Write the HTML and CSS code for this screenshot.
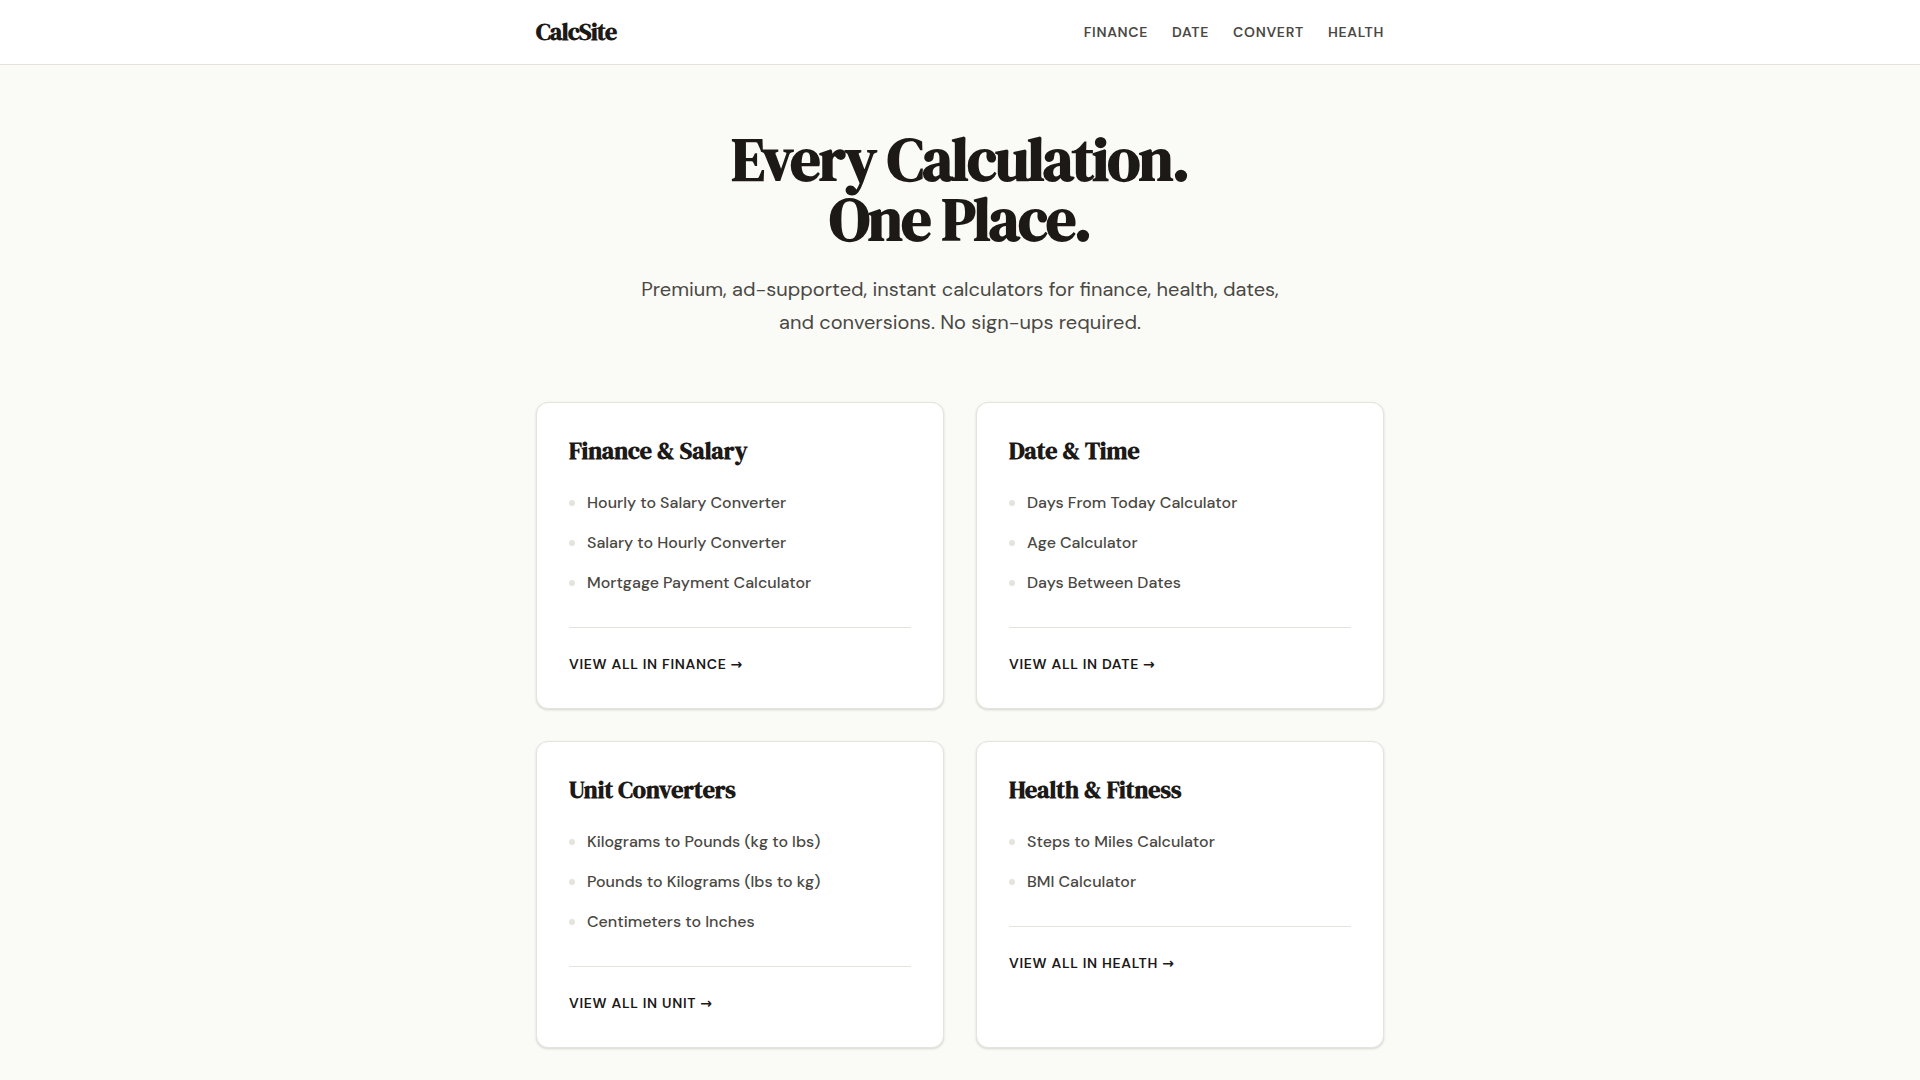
FILE: index.html
```html
<!DOCTYPE html>
<html lang="en">

<head>
    <meta charset="UTF-8">
    <meta name="viewport" content="width=device-width, initial-scale=1.0">
    <title>CalcSite</title>
    <link rel="stylesheet" href="styles.css">
</head>

<body>

    <header class="header">
        <div class="container header-inner">
            <a class="logo" href="#">CalcSite</a>
            <nav class="nav">
                <a href="#finance">Finance</a>
                <a href="#date">Date</a>
                <a href="#unit">Convert</a>
                <a href="#health">Health</a>
            </nav>
        </div>
    </header>

    <main class="container main">
        <section class="hero">
            <h1>Every Calculation.<br>One Place.</h1>
            <p>Premium, ad-supported, instant calculators for finance, health, dates, and conversions. No sign-ups required.</p>
        </section>

        <div class="grid">
            <section class="card" id="finance">
                <h2>Finance &amp; Salary</h2>
                <ul>
                    <li><a href="#">Hourly to Salary Converter</a></li>
                    <li><a href="#">Salary to Hourly Converter</a></li>
                    <li><a href="#">Mortgage Payment Calculator</a></li>
                </ul>
                <div class="card-footer">
                    <a href="#">View all in finance <span class="arrow">→</span></a>
                </div>
            </section>

            <section class="card" id="date">
                <h2>Date &amp; Time</h2>
                <ul>
                    <li><a href="#">Days From Today Calculator</a></li>
                    <li><a href="#">Age Calculator</a></li>
                    <li><a href="#">Days Between Dates</a></li>
                </ul>
                <div class="card-footer">
                    <a href="#">View all in date <span class="arrow">→</span></a>
                </div>
            </section>

            <section class="card" id="unit">
                <h2>Unit Converters</h2>
                <ul>
                    <li><a href="#">Kilograms to Pounds (kg to lbs)</a></li>
                    <li><a href="#">Pounds to Kilograms (lbs to kg)</a></li>
                    <li><a href="#">Centimeters to Inches</a></li>
                </ul>
                <div class="card-footer">
                    <a href="#">View all in unit <span class="arrow">→</span></a>
                </div>
            </section>

            <section class="card" id="health">
                <h2>Health &amp; Fitness</h2>
                <ul>
                    <li><a href="#">Steps to Miles Calculator</a></li>
                    <li><a href="#">BMI Calculator</a></li>
                </ul>
                <div class="card-footer">
                    <a href="#">View all in health <span class="arrow">→</span></a>
                </div>
            </section>
        </div>
    </main>

</body>

</html>
```
FILE: styles.css
```css
* {
    margin: 0;
    padding: 0;
    box-sizing: border-box;
}

body {
    background: #fafaf7;
    color: #1c1917;
    font-family: "DM Sans", Inter, sans-serif;
    font-size: 16px;
    line-height: 24px;
}

a {
    color: inherit;
    text-decoration: none;
}

ul {
    list-style: none;
}

.container {
    max-width: 896px;
    margin: 0 auto;
    padding: 0 24px;
}

/* header */

.header {
    background: #fff;
    border-bottom: 1px solid #e5e3dc;
}

.header-inner {
    display: flex;
    align-items: center;
    justify-content: space-between;
    min-height: 64px;
}

.logo,
h1,
h2 {
    font-family: "DM Serif Display", "Liberation Serif", serif;
    font-weight: 700;
}

.logo {
    font-size: 24px;
    line-height: 32px;
    letter-spacing: -0.025em;
}

.nav {
    display: flex;
    gap: 24px;
    color: #4a4843;
    font-size: 14px;
    font-weight: 600;
    letter-spacing: 0.05em;
    text-transform: uppercase;
}

.nav a:hover,
.card li a:hover {
    color: #1c1917;
}

/* hero */

.main {
    padding-top: 64px;
    padding-bottom: 32px;
}

.hero {
    max-width: 672px;
    margin: 0 auto 64px;
    text-align: center;
}

h1 {
    margin-bottom: 24px;
    font-size: 60px;
    line-height: 60px;
    letter-spacing: -0.025em;
}

.hero p {
    color: #4a4843;
    font-size: 20px;
    line-height: 1.625;
}

/* cards */

.grid {
    display: grid;
    grid-template-columns: repeat(2, 1fr);
    gap: 32px;
}

.card {
    padding: 32px;
    background: #fff;
    border: 1px solid #e5e3dc;
    border-radius: 12px;
    box-shadow: 0 1px 3px rgba(0, 0, 0, .1), 0 1px 2px rgba(0, 0, 0, .06);
}

h2 {
    margin-bottom: 24px;
    font-size: 24px;
    line-height: 32px;
}

.card ul {
    display: flex;
    flex-direction: column;
    gap: 16px;
}

.card li {
    display: flex;
    align-items: center;
    gap: 12px;
    color: #4a4843;
    font-weight: 500;
}

.card li::before {
    content: "";
    width: 6px;
    height: 6px;
    background: #e5e3dc;
    border-radius: 50%;
}

.card-footer {
    margin-top: 32px;
    padding-top: 24px;
    border-top: 1px solid #e5e3dc;
    font-size: 14px;
    font-weight: 600;
    letter-spacing: 0.05em;
    text-transform: uppercase;
}

.arrow {
    font-family: "DejaVu Sans", sans-serif;
}

@media (max-width: 700px) {
    .grid {
        grid-template-columns: 1fr;
    }
}
```
